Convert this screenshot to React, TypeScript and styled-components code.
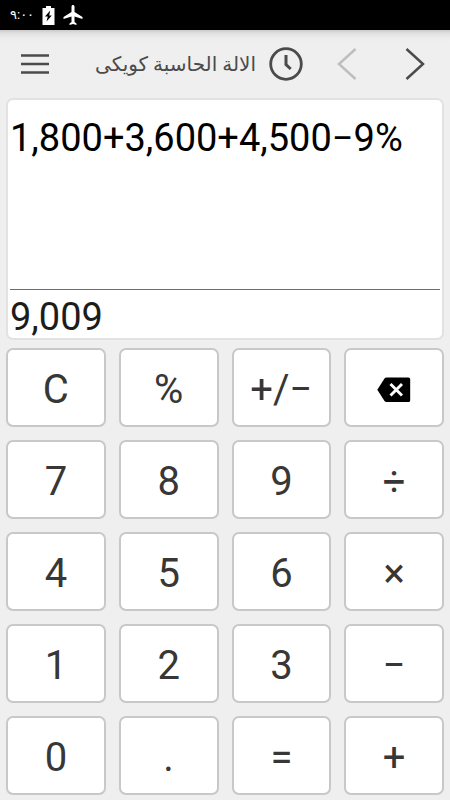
import React from "react";
import styled, { createGlobalStyle } from "styled-components";

const GlobalStyle = createGlobalStyle`
  *, *::before, *::after { box-sizing: border-box; }
  body {
    margin: 0;
    background: #efefef;
    font-family: Roboto, "DejaVu Sans", sans-serif;
  }
  button { font: inherit; cursor: pointer; }
`;

const Screen = styled.div`
  display: flex;
  flex-direction: column;
  min-height: 100vh;
`;

const StatusBar = styled.header`
  display: flex;
  align-items: center;
  gap: 8px;
  height: 30px;
  padding: 0 10px;
  background: #000;
  color: #fff;
`;

const Clock = styled.time`
  font-size: 13px;
  line-height: 16px;
`;

const Toolbar = styled.nav`
  display: flex;
  align-items: center;
  height: 68px;
  padding: 0 1px 0 8px;
  background: linear-gradient(#c9c9c9, #e0e0e0 3px, #ececec 8px, #efefef 12px);
`;

const IconButton = styled.button<{ $wide?: boolean }>`
  display: flex;
  align-items: center;
  justify-content: center;
  width: ${(p) => (p.$wide ? "68px" : "54px")};
  height: 40px;
  padding: 0;
  border: 0;
  background: none;
  color: #4b4b4b;
  &:disabled { color: #bebebe; cursor: default; }
`;

const Title = styled.h1`
  flex: 1;
  margin: 0;
  padding-right: 3px;
  text-align: right;
  font-size: 20px;
  line-height: 28px;
  font-weight: 400;
  color: #4b4b4b;
  white-space: nowrap;
`;

const Display = styled.main`
  display: flex;
  flex: 1;
  flex-direction: column;
  margin: 0 6px;
  padding: 0 2px;
  border: 2px solid #e2e2e2;
  border-radius: 7px;
  background: #fff;
  font-size: 38px;
  line-height: 44px;
`;

const Expression = styled.div`
  flex: 1;
  padding-top: 16px;
  border-bottom: 1px solid #6c6c6c;
  color: #000;
`;

const Result = styled.output`
  display: block;
  height: 48px;
  padding-top: 5px;
  color: #1c1c1c;
`;

const Keypad = styled.section`
  display: grid;
  grid-template-columns: repeat(4, 1fr);
  grid-auto-rows: 79px;
  gap: 13px;
  padding: 8px 6px 5px;
`;

const Key = styled.button`
  display: flex;
  align-items: center;
  justify-content: center;
  padding: 4px 0 0;
  border: 2px solid #c8c8c8;
  border-radius: 7px;
  background: #fff;
  color: #373737;
  font-size: 40px;
  line-height: 48px;
`;

const BatteryIcon = () => (
  <svg width="13" height="19" viewBox="0 0 13 19" aria-hidden="true">
    <path fill="#fff" d="M4 0h5v2h3.500v17H.5V2H4z" />
    <path fill="#000" d="M8.200 4.500 3 10.500h2.800L4.500 15.500l5.300-6H7.200z" />
  </svg>
);

const PlaneIcon = () => (
  <svg width="20" height="20" viewBox="2 2 19 20" aria-hidden="true">
    <path
      fill="#fff"
      d="M21 16v-2l-8-5V3.500c0-.83-.67-1.500-1.500-1.500S10 2.670 10 3.500V9l-8 5v2l8-2.500V19l-2 1.500V22l3.500-1 3.500 1v-1.500L13 19v-5.500l8 2.500z"
    />
  </svg>
);

const MenuIcon = () => (
  <svg width="28" height="22" viewBox="0 0 28 22" aria-hidden="true">
    <path d="M0 2.500h28M0 11h28M0 19.500h28" stroke="currentColor" strokeWidth="2.500" />
  </svg>
);

const HistoryIcon = () => (
  <svg width="34" height="34" viewBox="0 0 34 34" fill="none" stroke="currentColor" aria-hidden="true">
    <circle cx="17" cy="17" r="15.300" strokeWidth="2.800" />
    <path d="M17 8v9.500l4.700 4.500" strokeWidth="3" />
  </svg>
);

const Chevron = ({ back }: { back?: boolean }) => (
  <svg width="20" height="34" viewBox="0 0 20 34" fill="none" stroke="currentColor" strokeWidth="2.500" aria-hidden="true">
    <path d={back ? "M18.500 2 2 17l16.500 15" : "M1.500 2 18 17 1.500 32"} />
  </svg>
);

const BackspaceIcon = () => (
  <svg width="34" height="26" viewBox="0 0 34 26" aria-hidden="true">
    <path fill="#000" d="M9.500.5h21.800c1.200 0 1.900.8 1.900 1.900v20.800c0 1.200-.8 1.900-1.900 1.900H9.500c-.9 0-1.500-.4-2-1.100L.3 12.800 7.500 1.600C8 .9 8.600.5 9.500.5z" />
    <path d="m13.500 7 11.500 11.500M25 7 13.500 18.500" stroke="#fff" strokeWidth="2.900" />
  </svg>
);

const keys: { label: string; icon?: React.ReactNode }[] = [
  { label: "C" },
  { label: "%" },
  { label: "+/−" },
  { label: "Backspace", icon: <BackspaceIcon /> },
  ...["7", "8", "9", "÷", "4", "5", "6", "×", "1", "2", "3", "−", "0", ".", "=", "+"].map((label) => ({ label })),
];

export default function App() {
  return (
    <Screen>
      <GlobalStyle />
      <StatusBar>
        <Clock dateTime="09:00" lang="ar">٩:٠٠</Clock>
        <BatteryIcon />
        <PlaneIcon />
      </StatusBar>
      <Toolbar>
        <IconButton aria-label="Menu">
          <MenuIcon />
        </IconButton>
        <Title lang="ar" dir="rtl">الالة الحاسبة كويكى</Title>
        <IconButton aria-label="History">
          <HistoryIcon />
        </IconButton>
        <IconButton $wide aria-label="Previous" disabled>
          <Chevron back />
        </IconButton>
        <IconButton $wide aria-label="Next">
          <Chevron />
        </IconButton>
      </Toolbar>
      <Display>
        <Expression>1,800+3,600+4,500−9%</Expression>
        <Result>9,009</Result>
      </Display>
      <Keypad>
        {keys.map(({ label, icon }) => (
          <Key key={label} aria-label={icon ? label : undefined}>
            {icon ?? label}
          </Key>
        ))}
      </Keypad>
    </Screen>
  );
}
